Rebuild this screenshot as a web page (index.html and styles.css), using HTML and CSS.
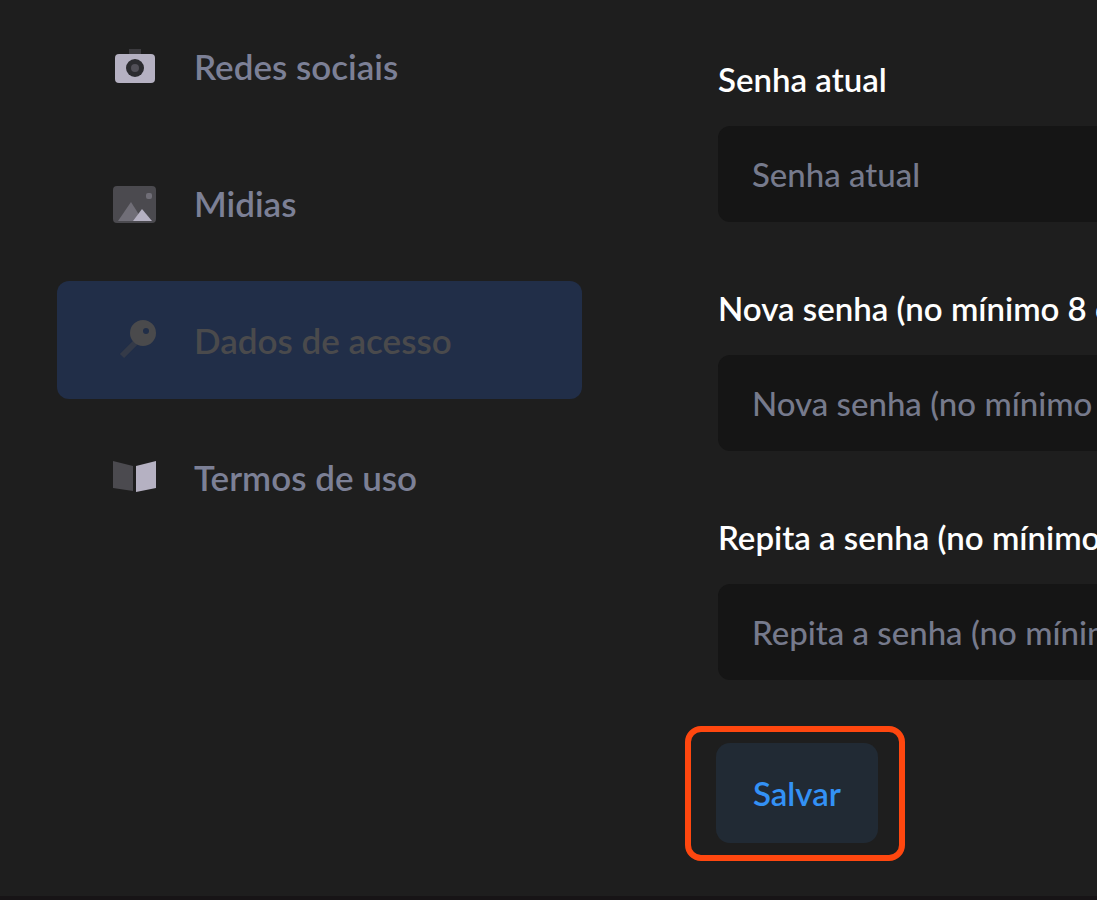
FILE: index.html
```html
<!DOCTYPE html>
<html lang="pt-BR">
<head>
    <meta charset="UTF-8">
    <meta name="viewport" content="width=device-width, initial-scale=1.0">
    <title>Dados de acesso</title>
    <link rel="stylesheet" href="styles.css">
</head>
<body>
    <div class="page">
        <!-- Menu lateral -->
        <nav class="menu">
            <a href="#redes" class="menu-item">
                <svg class="icon" viewBox="0 0 48 48">
                    <path fill="#3c3b3f" d="M18 7h12v6H18z"/>
                    <rect x="4" y="12" width="40" height="29" rx="4" fill="#b5b1c2"/>
                    <circle cx="24" cy="26" r="9" fill="#2b2b2f"/>
                    <circle cx="24" cy="26" r="4" fill="#514f57"/>
                </svg>
                <span>Redes sociais</span>
            </a>
            <a href="#midias" class="menu-item">
                <svg class="icon" viewBox="0 0 48 48">
                    <rect x="2" y="7" width="43" height="37" rx="4" fill="#4b4a4f"/>
                    <path fill="#706e77" d="M7 42l13-19 12 19z"/>
                    <path fill="#b5b1c2" d="M22 42l9-12 10 12z"/>
                    <rect x="35" y="14" width="6" height="6" rx="2" fill="#706e77"/>
                </svg>
                <span>Midias</span>
            </a>
            <a href="#acesso" class="menu-item active">
                <svg class="icon" viewBox="0 0 48 48">
                    <path stroke="#343a48" stroke-width="6" d="M11 40l13-13"/>
                    <path fill="#4a4a4c" fill-rule="evenodd" d="M32 4a13 13 0 1 0 0 26a13 13 0 1 0 0-26zM35 12a3 3 0 1 1 0 6a3 3 0 1 1 0-6z"/>
                </svg>
                <span>Dados de acesso</span>
            </a>
            <a href="#termos" class="menu-item">
                <svg class="icon" viewBox="0 0 48 48">
                    <path fill="#4b4a4f" d="M2 8l20 5v25L2 35z"/>
                    <path fill="#b5b1c2" d="M25 13l20-5v27l-20 4z"/>
                </svg>
                <span>Termos de uso</span>
            </a>
        </nav>

        <!-- Troca de senha -->
        <form class="form">
            <div class="field">
                <label for="atual">Senha atual</label>
                <input type="password" id="atual" placeholder="Senha atual">
            </div>
            <div class="field">
                <label for="nova">Nova senha (no mínimo 8 caracteres)</label>
                <input type="password" id="nova" placeholder="Nova senha (no mínimo 8 caracteres)">
            </div>
            <div class="field">
                <label for="repita">Repita a senha (no mínimo 8 caracteres)</label>
                <input type="password" id="repita" placeholder="Repita a senha (no mínimo 8 caracteres)">
            </div>
            <div class="highlight">
                <button type="button" class="btn-save">Salvar</button>
            </div>
        </form>
    </div>
</body>
</html>
```

FILE: styles.css
```css
* {
    box-sizing: border-box;
}

body {
    margin: 0;
    min-height: 100vh;
    background: #1e1e1e;
    border-bottom: 4px solid #171416;
    font-family: Lato, "Open Sans", sans-serif;
    font-size: 33px;
    line-height: 40px;
    overflow: hidden;
}

.page {
    display: grid;
    grid-template-columns: 525px minmax(900px, 1fr);
    column-gap: 136px;
    padding-left: 57px;
}

/* Menu */
.menu {
    display: flex;
    flex-direction: column;
    gap: 19px;
    padding-top: 7px;
}

.menu-item {
    display: flex;
    align-items: center;
    gap: 35px;
    height: 118px;
    padding-left: 54px;
    border-radius: 12px;
    color: #7c8096;
    font-size: 35px;
    font-weight: 600;
    text-decoration: none;
}

.menu-item.active {
    background: #212e48;
    color: #4a4a4c;
}

.icon {
    width: 48px;
    height: 48px;
}

/* Formulário */
.form {
    padding-top: 59px;
}

.field {
    display: flex;
    flex-direction: column;
    gap: 27px;
    margin-bottom: 66px;
}

.field label {
    color: #fff;
    font-weight: 600;
}

.field input {
    height: 96px;
    padding: 0 34px;
    border: none;
    border-radius: 12px;
    background: #151515;
    color: #fff;
    font: inherit;
    font-weight: 500;
}

.field input::placeholder {
    color: #767a8c;
    opacity: 1;
}

/* Destaque em volta do botão */
.highlight {
    width: fit-content;
    margin: -20px 0 0 -33px;
    padding: 11px 21px 12px 25px;
    border: 6px solid #ff470f;
    border-radius: 16px;
}

.btn-save {
    display: block;
    height: 100px;
    padding: 0 37px;
    border: none;
    border-radius: 14px;
    background: #212a34;
    color: #3391f5;
    font: inherit;
    font-weight: 600;
}
```
